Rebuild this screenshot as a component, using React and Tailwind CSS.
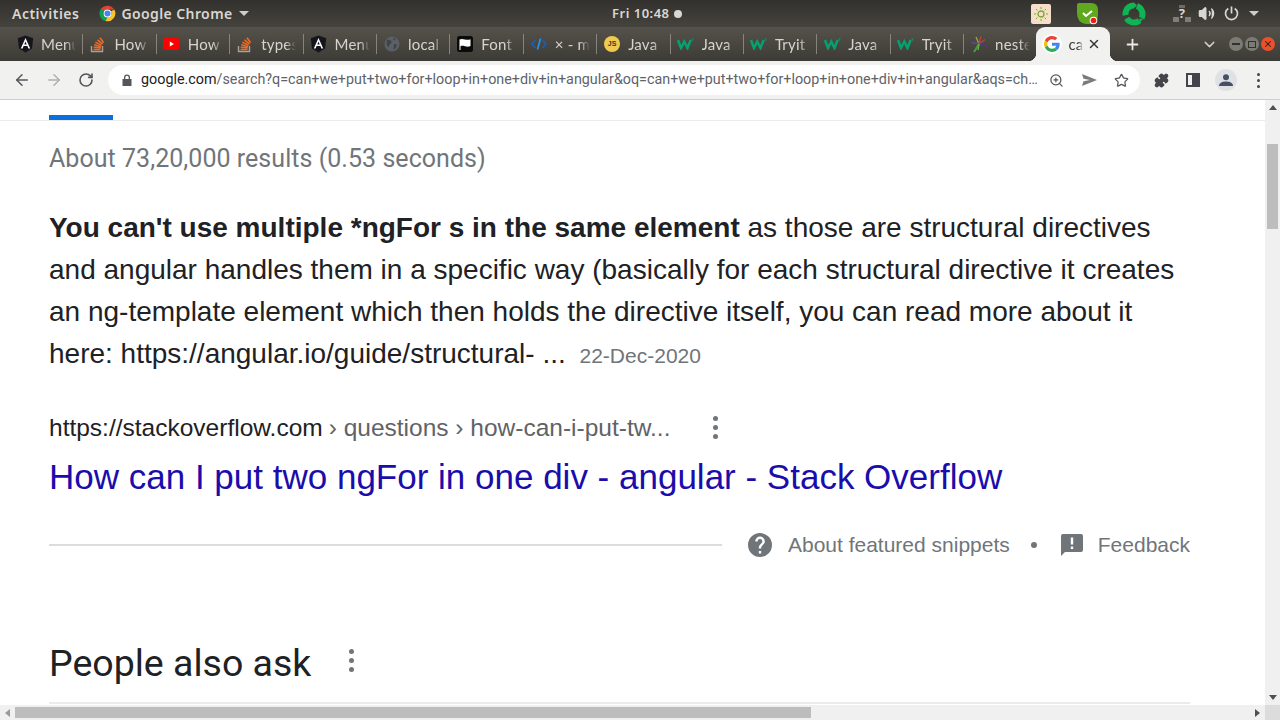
import React from "react";
import { ArrowLeft, ArrowRight, RotateCw, ZoomIn, Star, Puzzle, ChevronDown, Plus, X, Volume2 } from "lucide-react";

const Angular = () => (
  <svg width="17" height="18" viewBox="0 0 17 18"><path d="M8.5 0.5 L0.8 3.2 L2 13.5 L8.5 17.5 L15 13.5 L16.2 3.2Z" fill="#15151c"/><path d="M8.5 3 L3.8 13.5 H5.6 L6.6 11 H10.4 L11.4 13.5 H13.2Z M7.3 9.5 L8.5 6.5 L9.7 9.5Z" fill="#fff" fillRule="evenodd"/></svg>
);
const SO = () => (
  <svg width="16" height="18" viewBox="0 0 16 18" fill="none"><path d="M1.5 11v5.5h11V11" stroke="#a8a29a" strokeWidth="1.4"/><g stroke="#f06a25" strokeWidth="1.6"><path d="M3.5 14.5h7"/><path d="M3.7 12.2l7 .7"/><path d="M4.2 9.8l6.8 1.9"/><path d="M5.4 7.2l6.2 3.2"/><path d="M7.5 4.8l5 4.3"/><path d="M10 2.8l3.6 5"/></g></svg>
);
const YT = () => (
  <svg width="17" height="12" viewBox="0 0 17 12"><rect width="16.5" height="12" rx="3" fill="#f00"/><path d="M6.8 3.4v5l4.2-2.5z" fill="#fff"/></svg>
);
const Globe = () => (
  <svg width="16" height="16" viewBox="0 0 16 16"><circle cx="8" cy="8" r="7.5" fill="#5b5f66"/><path d="M3 3.5l4 1 .5 2.5-2 1.5-1 3-2-3zM10 8l3 .5-1.5 4-2 1z M9 2l3 1-2 1.5z" fill="#41434a"/></svg>
);
const Flag = () => (
  <svg width="16" height="16" viewBox="0 0 16 16"><rect width="16" height="16" rx="2.5" fill="#0b0b0b"/><path d="M2.5 3.5c2-1 3.500-.5 5.500 0s3.500.5 5.500-.3v6.800c-2 1-3.500.8-5.500.2s-3.500-.6-4.500 0V14H2.500z" fill="#fff"/></svg>
);
const Code = () => (
  <svg width="16" height="12" viewBox="0 0 16 12" fill="none" strokeWidth="1.7"><path d="M4.500 2L1 6l3.500 4" stroke="#1a5fb4"/><path d="M11.500 2L15 6l-3.500 4" stroke="#1a5fb4"/><path d="M9.500 .5L6.500 11.500" stroke="#2a8fe0"/></svg>
);
const JS = () => (
  <div className="w-4 h-4 rounded-full bg-[#f0c94f] flex items-center justify-center text-[7px] font-bold text-[#3a3320] [font-family:'Liberation_Sans',sans-serif]">JS</div>
);
const W3 = () => (
  <svg width="17" height="12" viewBox="0 0 17 12" fill="none"><path d="M1 2l3 8 3.300-6.500L10.500 10l3.200-8" stroke="#04a26e" strokeWidth="2.500"/><path d="M14.300 .8h2l-1 1.200q1 .4.400 1.400" stroke="#04a26e" strokeWidth=".7"/></svg>
);
const Nest = () => (
  <svg width="17" height="17" viewBox="0 0 17 17" fill="none" strokeWidth="1.300"><path d="M8 8L5 1" stroke="#a8a050"/><path d="M8 8L10 .5" stroke="#b04a3a"/><path d="M8 8L14 3.500" stroke="#c04040"/><path d="M8 8L.5 6.500" stroke="#5a4a9a"/><path d="M8 8L16 10" stroke="#4a3a8a"/><path d="M8 8L3 16" stroke="#3aa040" strokeWidth="2"/><path d="M8 8L7 14" stroke="#70b040"/></svg>
);
const GoogleG = () => (
  <svg width="16" height="16" viewBox="0 0 48 48"><path fill="#EA4335" d="M24 9.500c3.500 0 6.700 1.300 9.200 3.400l6.900-6.900C35.900 2.200 30.300 0 24 0 14.600 0 6.500 5.400 2.600 13.200l8 6.200C12.500 13.600 17.800 9.500 24 9.500z"/><path fill="#4285F4" d="M47 24.500c0-1.600-.2-3.100-.4-4.500H24v9h12.900c-.6 3-2.200 5.500-4.800 7.200l7.700 6C44.300 38 47 31.800 47 24.500z"/><path fill="#FBBC05" d="M10.600 28.600c-.5-1.400-.8-3-.8-4.600s.3-3.200.8-4.600l-8-6.200C.9 16.500 0 20.100 0 24s.9 7.500 2.600 10.800l8-6.200z"/><path fill="#34A853" d="M24 48c6.500 0 11.900-2.100 15.800-5.800l-7.700-6c-2.100 1.400-4.900 2.300-8.100 2.300-6.200 0-11.500-4.100-13.400-9.900l-8 6.200C6.500 42.600 14.600 48 24 48z"/></svg>
);
const ChromeLogo = () => (
  <svg width="17" height="17" viewBox="0 0 48 48">
    <path fill="#db4437" d="M24 2a22 22 0 0 1 19 11H24a11 11 0 0 0-10 6.500L6.500 9.500A22 22 0 0 1 24 2z"/>
    <path fill="#0f9d58" d="M6.500 9.500L14 19.500A11 11 0 0 0 24 35l-6 10.200A22 22 0 0 1 6.500 9.500z"/>
    <path fill="#fbc02d" d="M43 13a22 22 0 0 1-25 32.200L24 35a11 11 0 0 0 9.500-16.500L43 13z"/>
    <circle cx="24" cy="24" r="11" fill="#fff"/><circle cx="24" cy="24" r="8.500" fill="#4285f4"/>
  </svg>
);

const tabs = [
  [<Angular />, "Menu"], [<SO />, "How"], [<YT />, "How"], [<SO />, "types"], [<Angular />, "Menu"],
  [<Globe />, "local"], [<Flag />, "Font"], [<Code />, "× - mu"], [<JS />, "Java"], [<W3 />, "Java"],
  [<W3 />, "Tryit"], [<W3 />, "Java"], [<W3 />, "Tryit"], [<Nest />, "neste"],
];

function Tab({ icon, label, first }) {
  return (
    <div className="w-[73.4px] h-[34px] flex items-center shrink-0 relative">
      <div className={"w-px h-[20px] " + (first ? "bg-transparent" : "bg-[#87847c]")} />
      <div className="w-[24px] ml-[3px] flex justify-center shrink-0"><span className="w-[17px] flex justify-center">{icon}</span></div>
      <div className="ml-[4px] w-[35px] overflow-hidden whitespace-nowrap text-[15px] text-[#d6d4cf] tracking-[0.2px] [mask-image:linear-gradient(to_right,black_70%,transparent)]">{label}</div>
    </div>
  );
}

const Dots = ({ ml }) => (
  <span className={"flex flex-col gap-[4px] " + ml}>
    <span className="w-[5px] h-[5px] rounded-full bg-[#70757a]" />
    <span className="w-[5px] h-[5px] rounded-full bg-[#70757a]" />
    <span className="w-[5px] h-[5px] rounded-full bg-[#70757a]" />
  </span>
);

export default function App() {
  return (
    <div className="w-[1280px] h-[720px] overflow-hidden flex flex-col bg-white [font-family:'Liberation_Sans',Arial,sans-serif]">
      {/* GNOME top bar */}
      <div className="h-[27px] shrink-0 flex items-center bg-[linear-gradient(#33312d,#45433d)] text-[#d9d7d2] text-[14px] font-semibold [font-family:'Noto_Sans',sans-serif] tracking-[0.5px] relative">
        <span className="ml-[12px]">Activities</span>
        <span className="ml-[20px] flex items-center"><ChromeLogo /></span>
        <span className="ml-[5px] tracking-[0.4px]">Google Chrome</span>
        <svg className="ml-[6px]" width="10" height="5" viewBox="0 0 10 5"><path d="M0 0h10L5 5z" fill="#cfcdc8"/></svg>
        <div className="absolute left-[612px] top-0 h-[27px] flex items-center gap-[4px] text-[13px]">
          <span>Fri 10:48</span><span className="w-[8px] h-[8px] rounded-full bg-[#d9d7d2]" />
        </div>
        <div className="absolute left-[1031px] top-0 h-[27px] flex items-center">
          <div className="w-[20px] h-[20px] rounded-[2px] bg-[#f6dfc9] flex items-center justify-center">
            <svg width="14" height="14" viewBox="0 0 14 14" fill="none" stroke="#7ca832"><circle cx="7" cy="7" r="3" strokeWidth="1.300"/><path d="M7 0v2M7 12v2M0 7h2M12 7h2M2 2l1.400 1.400M10.600 10.600L12 12M12 2l-1.400 1.400M2 12l1.400-1.400" strokeWidth="1"/></svg>
          </div>
          <svg className="ml-[25px]" width="23" height="23" viewBox="0 0 23 23"><path d="M3 1h12q7 0 7 7v5q0 8-8 9H10Q1 21 1 11V3q0-2 2-2z" fill="#5fa81f"/><path d="M7 11l3 3 6-5" stroke="#fff" strokeWidth="2" fill="none"/><circle cx="17.500" cy="18.500" r="3.800" fill="#fff"/><circle cx="17.500" cy="18.500" r="2.800" fill="#ee1c1c"/></svg>
          <svg className="ml-[23px]" width="24" height="24" viewBox="0 0 24 24" fill="#0fb554">
            <circle cx="12" cy="12" r="8.500" fill="none" stroke="#0fb554" strokeWidth="6" strokeDasharray="14.500 3.300" transform="rotate(-70 12 12)" />
            <path d="M3 17l3.500-.5.500 5zM21 17l-3.500-.5-.500 5zM12 .5l3 3-3 2.500z" />
          </svg>
          <div className="ml-[27px] w-[18px] h-[18px] relative flex items-center justify-center">
            <span className="text-[#d9d7d2] font-bold text-[13px] leading-none">?</span>
            <span className="absolute left-0 bottom-[1px] w-[6px] h-[5px] bg-[#807d77]" />
            <span className="absolute right-0 bottom-[1px] w-[6px] h-[5px] bg-[#807d77]" />
            <span className="absolute left-[6px] top-0 w-[6px] h-[3px] bg-[#6c6a64]" />
          </div>
          <Volume2 className="ml-[7px]" size={17} color="#d9d7d2" fill="#d9d7d2" strokeWidth={2} />
          <svg className="ml-[9px]" width="15" height="15" viewBox="0 0 15 15" fill="none" stroke="#d9d7d2" strokeWidth="1.700"><path d="M4.300 2.500a6 6 0 1 0 6.400 0"/><path d="M7.500 .5v7"/></svg>
          <svg className="ml-[10px]" width="10" height="5" viewBox="0 0 10 5"><path d="M0 0h10L5 5z" fill="#cfcdc8"/></svg>
        </div>
      </div>

      {/* Tab strip */}
      <div className="h-[34px] shrink-0 flex items-end bg-[linear-gradient(#55524b,#3d3b36)] pl-[9px] [font-family:'Lato','Noto_Sans',sans-serif]">
        {tabs.map(([icon, label], i) => <Tab key={i} icon={icon} label={label} first={i === 0} />)}
        <div className="relative w-[74px] h-[34px] shrink-0 bg-[#f1f1f0] rounded-t-[9px] flex items-center">
          <span className="absolute left-[-8px] bottom-0 w-[8px] h-[8px] bg-[radial-gradient(circle_at_0_0,transparent_8px,#f1f1f0_8.500px)]" />
          <span className="absolute right-[-8px] bottom-0 w-[8px] h-[8px] bg-[radial-gradient(circle_at_100%_0,transparent_8px,#f1f1f0_8.500px)]" />
          <span className="ml-[8px] w-[16px] h-[16px] flex rounded-full bg-white ring-2 ring-white"><GoogleG /></span>
          <span className="ml-[8px] w-[15px] overflow-hidden text-[15px] text-[#3c3c3c] [mask-image:linear-gradient(to_right,black_70%,transparent)]">ca</span>
          <X className="ml-[4px]" size={14} color="#333" strokeWidth={2.500} />
        </div>
        <div className="w-[45px] h-[34px] flex items-center justify-center shrink-0"><Plus size={17} color="#ecebe8" strokeWidth={2.500} /></div>
        <div className="ml-[46px] h-[34px] flex items-center"><ChevronDown size={17} color="#cfcdc8" strokeWidth={2} /></div>
        <div className="ml-[11px] h-[34px] flex items-center gap-[2px]">
          <span className="w-[14px] h-[14px] rounded-full bg-[#7c7a74] flex items-center justify-center"><span className="w-[8px] h-[1.500px] bg-[#33312e]" /></span>
          <span className="w-[14px] h-[14px] rounded-full bg-[#7c7a74] flex items-center justify-center"><span className="w-[8px] h-[7px] border border-[#33312e]" /></span>
          <span className="w-[14px] h-[14px] rounded-full bg-[#e9512a] flex items-center justify-center"><X size={10} color="#33201a" strokeWidth={2.500} /></span>
        </div>
      </div>

      {/* Toolbar */}
      <div className="h-[39px] shrink-0 flex items-center bg-[#f1f1f0] border-b border-[#d0cfcc]">
        <ArrowLeft className="ml-[13px]" size={18} color="#55565a" strokeWidth={2} />
        <ArrowRight className="ml-[14px]" size={18} color="#b0b0b0" strokeWidth={2} />
        <RotateCw className="ml-[15px]" size={16} color="#55565a" strokeWidth={2.400} />
        <div className="ml-[14px] w-[1032px] h-[30px] bg-white rounded-full flex items-center pl-[14px] shrink-0">
          <svg width="10" height="12" viewBox="0 0 10 12"><path d="M2 5V3.500a3 3 0 0 1 6 0V5h1.500v7H.500V5z M3.300 5h3.400V3.500a1.700 1.700 0 0 0-3.400 0z" fill="#55565a" fillRule="evenodd"/></svg>
          <div className="ml-[9px] w-[898px] text-[14.33px] whitespace-nowrap overflow-hidden text-[#5f6368] [font-family:'Roboto',sans-serif]"><span className="text-[#202124]">google.com</span>/search?q=can+we+put+two+for+loop+in+one+div+in+angular&amp;oq=can+we+put+two+for+loop+in+one+div+in+angular&amp;aqs=ch…</div>
          <ZoomIn className="ml-[10px]" size={15} color="#55565a" strokeWidth={2} />
          <svg className="ml-[18px]" width="15" height="12" viewBox="0 0 15 12"><path d="M0 0l15 6-15 6 1.500-4.700L8 6 1.500 4.700z" fill="#7a7b7e"/></svg>
          <Star className="ml-[17px]" size={15} color="#55565a" strokeWidth={2} />
        </div>
        <Puzzle className="ml-[14px]" size={15} color="#44454a" fill="#44454a" strokeWidth={2} />
        <div className="ml-[17px] w-[14px] h-[14px] border-[2px] border-[#44454a] flex justify-end"><span className="w-[6px] h-full bg-[#44454a]" /></div>
        <div className="ml-[15px] w-[22px] h-[22px] rounded-full bg-[#dfe1e5] flex items-center justify-center">
          <svg width="14" height="12" viewBox="0 0 14 12" fill="#455065"><circle cx="7" cy="3.200" r="3"/><path d="M0 12q0-4.500 7-4.500T14 12z"/></svg>
        </div>
        <div className="ml-[20px] flex flex-col gap-[3px]"><span className="w-[3px] h-[3px] rounded-full bg-[#44454a]" /><span className="w-[3px] h-[3px] rounded-full bg-[#44454a]" /><span className="w-[3px] h-[3px] rounded-full bg-[#44454a]" /></div>
      </div>

      {/* Viewport */}
      <div className="flex-1 min-h-0 flex">
        <div className="flex-1 min-w-0 overflow-hidden flex flex-col">
          <div className="h-[21px] shrink-0 border-b border-[#ebebeb] pl-[49px] flex items-end"><span className="w-[64px] h-[5px] bg-[#0b6fdc]" /></div>
          <div className="pl-[49px] w-[1190px]">
            <div className="mt-[21px] text-[25px] leading-[34px] tracking-[0.04px] text-[#70757a] [font-family:'Roboto',sans-serif]">About 73,20,000 results (0.53 seconds)</div>
            <div className="mt-[31px] w-[1141px] text-[28px] leading-[42px] text-[#202124]">
              <span className="font-bold">You can't use multiple *ngFor s in the same element</span> as those are structural directives<br />and angular handles them in a specific way (basically for each structural directive it creates<br />an ng-template element which then holds the directive itself, you can read more about it<br />here: https://angular.io/guide/structural- ... <span className="ml-[6px] text-[21px] text-[#70757a]">22-Dec-2020</span>
            </div>
            <div className="mt-[33px] h-[36px] flex items-center text-[24.500px] text-[#202124] whitespace-nowrap">
              <span>https://stackoverflow.com</span><span className="text-[#5f6368] ml-[6px]">› questions › how-can-i-put-tw...</span>
              <Dots ml="ml-[43px] -mt-[2px]" />
            </div>
            <div className="mt-[10px] text-[35px] leading-[42px] text-[#1a0dab] whitespace-nowrap">How can I put two ngFor in one div - angular - Stack Overflow</div>
            <div className="mt-[23px] flex items-center h-[48px] whitespace-nowrap">
              <div className="w-[673px] h-[2px] bg-[#dadce0]" />
              <svg className="ml-[26px]" width="24" height="24" viewBox="0 0 24 24"><path fill="#70757a" d="M12 0a12 12 0 1 0 0 24 12 12 0 0 0 0-24zm1.200 20.400h-2.400V18h2.400zm2.500-9.300l-1.100 1.100c-.9.900-1.400 1.600-1.400 3.400h-2.400v-.6c0-1.300.5-2.500 1.400-3.400l1.500-1.500c.4-.4.700-1 .7-1.700a2.400 2.400 0 0 0-4.800 0H7.200a4.800 4.800 0 0 1 9.600 0c0 1.100-.4 2-1.100 2.700z"/></svg>
              <span className="ml-[16px] text-[21px] text-[#70757a]">About featured snippets</span>
              <span className="ml-[21px] w-[6px] h-[6px] rounded-full bg-[#70757a]" />
              <svg className="ml-[24px]" width="22" height="22" viewBox="0 0 22 22"><path fill="#70757a" d="M2 0h18q2 0 2 2v14q0 2-2 2H4l-4 4V2q0-2 2-2zm7.800 3.500v7h2.400v-7zm0 9v2.500h2.400v-2.500z" fillRule="evenodd"/></svg>
              <span className="ml-[15px] text-[21px] text-[#70757a]">Feedback</span>
            </div>
            <div className="mt-[72px] flex items-center h-[44px]">
              <span className="text-[37.500px] leading-[44px] text-[#202124] [font-family:'Roboto',sans-serif]">People also ask</span>
              <Dots ml="ml-[38px] -mt-[5px]" />
            </div>
            <div className="mt-[17px] w-[1141px] h-[2px] bg-[#ebebeb]" />
          </div>
        </div>
        {/* Vertical scrollbar */}
        <div className="w-[15px] shrink-0 bg-[#f0f0f0] flex flex-col items-center">
          <svg className="mt-[5px]" width="8" height="5" viewBox="0 0 8 5"><path d="M4 0l4 5H0z" fill="#505050"/></svg>
          <div className="mt-[34px] w-[11px] h-[85px] bg-[#bdbdbd]" />
          <div className="flex-1" />
          <svg className="mb-[5px]" width="8" height="5" viewBox="0 0 8 5"><path d="M4 5l4-5H0z" fill="#505050"/></svg>
        </div>
      </div>

      {/* Horizontal scrollbar */}
      <div className="h-[15px] shrink-0 flex items-center bg-[#f0f0f0]">
        <svg className="ml-[5px]" width="5" height="8" viewBox="0 0 5 8"><path d="M0 4l5-4v8z" fill="#9a9a9a"/></svg>
        <div className="ml-[5px] w-[796px] h-[11px] bg-[#bdbdbd]" />
        <div className="flex-1" />
        <svg className="mr-[5px]" width="5" height="8" viewBox="0 0 5 8"><path d="M5 4L0 0v8z" fill="#505050"/></svg>
        <div className="w-[15px] h-[15px] bg-[#dcdcdc]" />
      </div>
    </div>
  );
}
